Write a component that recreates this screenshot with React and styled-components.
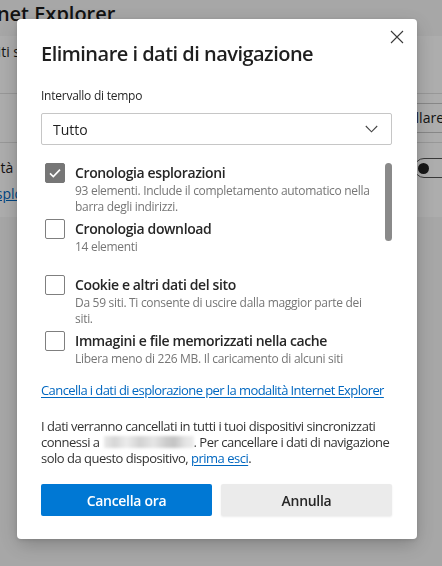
import React from "react";
import styled, { createGlobalStyle } from "styled-components";

const GlobalStyle = createGlobalStyle`
  html, body {
    margin: 0;
    padding: 0;
    background: #f7f7f7;
    font-family: "Open Sans", "Noto Sans", sans-serif;
    overflow: hidden;
  }
`;

/* ---------- background settings page (dimmed) ---------- */

const Page = styled.div`
  width: 442px;
  height: 566px;
  overflow: hidden;
  color: #1b1b1b;
`;

const PageTitle = styled.h1`
  margin: 0 0 8px -50px;
  font-size: 20px;
  line-height: 28px;
  font-weight: 600;
  white-space: nowrap;
`;

const Card = styled.div`
  background: #ffffff;
  width: 457px;
`;

const CardRow = styled.div`
  display: flex;
  align-items: ${(p) => (p.$top ? "flex-start" : "center")};
  justify-content: space-between;
  height: ${(p) => p.$h}px;
  padding-top: ${(p) => p.$pt || 0}px;
  border-bottom: ${(p) => (p.$last ? "none" : "1px solid #e0e0e0")};
  box-sizing: border-box;
  font-size: 14px;
  line-height: 20px;
  white-space: nowrap;
`;

const RowText = styled.div`
  display: flex;
  flex-direction: column;
  gap: 6px;
  margin-left: ${(p) => p.$shift}px;
`;

const RowLink = styled.a`
  color: #0067c0;
  text-decoration: underline;
`;

const GhostButton = styled.div`
  border: 1px solid #c8c8c8;
  border-radius: 3px;
  padding: 4px 12px;
  margin-left: auto;
`;

const Toggle = styled.div`
  width: 38px;
  height: 18px;
  border: 1px solid #555;
  border-radius: 10px;
  display: flex;
  align-items: center;
  padding-left: 3px;
  &::before {
    content: "";
    width: 11px;
    height: 11px;
    border-radius: 50%;
    background: #222;
  }
`;

/* ---------- dialog ---------- */

const Backdrop = styled.div`
  position: fixed;
  inset: 0;
  background: rgba(0, 0, 0, 0.32);
  display: flex;
  align-items: flex-start;
  padding: 19px 0 0 17px;
`;

const Dialog = styled.div`
  position: relative;
  width: 400px;
  box-sizing: border-box;
  padding: 21px 25px 23px 24px;
  background: #ffffff;
  border-radius: 4px;
  box-shadow: 0 6px 20px rgba(0, 0, 0, 0.22), 0 1px 4px rgba(0, 0, 0, 0.12);
  color: #1f1f1f;
`;

const CloseButton = styled.button`
  position: absolute;
  top: 2px;
  right: 4px;
  width: 32px;
  height: 32px;
  border: 0;
  background: transparent;
  padding: 0;
  display: flex;
  align-items: center;
  justify-content: center;
`;

const Title = styled.h2`
  margin: 0 0 19px;
  font-size: 20px;
  line-height: 28px;
  font-weight: 600;
  letter-spacing: -0.52px;
`;

const FieldLabel = styled.div`
  font-size: 12px;
  line-height: 18px;
  color: #262626;
  margin-bottom: 8px;
  letter-spacing: -0.25px;
`;

const Select = styled.div`
  height: 32px;
  box-sizing: border-box;
  border: 1px solid #c6c6c6;
  border-radius: 2px;
  display: flex;
  align-items: center;
  justify-content: space-between;
  padding: 0 13px 0 11px;
  font-size: 14px;
  color: #1f1f1f;
`;

const ListFrame = styled.div`
  position: relative;
  margin-top: 8px;
`;

const ScrollList = styled.div`
  height: 215px;
  overflow: hidden;
  padding: 10px 0 0 4px;
  box-sizing: border-box;
`;

const ScrollThumb = styled.div`
  position: absolute;
  top: 10px;
  right: 0;
  width: 7px;
  height: 78px;
  border-radius: 4px;
  background: #8a8a8a;
`;

const Option = styled.label`
  display: flex;
  gap: 10px;
  min-height: 56px;
  padding-bottom: 4px;
  padding-right: 10px;
  box-sizing: border-box;
`;

const Box = styled.span`
  flex: 0 0 auto;
  width: 20px;
  height: 20px;
  box-sizing: border-box;
  border-radius: 2px;
  border: 1px solid ${(p) => (p.$checked ? "#767676" : "#7f7f7f")};
  background: ${(p) => (p.$checked ? "#767676" : "#ffffff")};
  display: flex;
  align-items: center;
  justify-content: center;
`;

const OptionText = styled.div`
  display: flex;
  flex-direction: column;
`;

const OptionTitle = styled.div`
  font-size: 14px;
  line-height: 20px;
  font-weight: 600;
  color: #262626;
  letter-spacing: -0.38px;
`;

const OptionDesc = styled.div`
  font-size: 12px;
  line-height: 16px;
  color: #767676;
  letter-spacing: -0.3px;
`;

const IELink = styled.a`
  display: block;
  margin-top: 13px;
  font-size: 13px;
  line-height: 18px;
  color: #0067c0;
  text-decoration: underline;
  text-underline-offset: 2px;
  letter-spacing: -0.58px;
  white-space: nowrap;
`;

const Note = styled.p`
  margin: 19px 0 0;
  font-size: 13px;
  line-height: 16px;
  color: #333333;
  letter-spacing: -0.5px;
`;

const InlineLink = styled.a`
  color: #0067c0;
  text-decoration: underline;
  text-underline-offset: 2px;
`;

const Blurred = styled.span`
  display: inline-block;
  width: 90px;
  height: 12px;
  vertical-align: -1px;
  margin-left: 4px;
  background: linear-gradient(
    90deg,
    #e9e9e9 0%,
    #d6d6d6 12%,
    #ececec 25%,
    #d2d2d2 40%,
    #e6e6e6 55%,
    #cbcbcb 70%,
    #c4c4c4 78%,
    #e3e3e3 90%,
    #ededed 100%
  );
  filter: blur(1.5px);
`;

const Actions = styled.div`
  margin-top: 18px;
  display: grid;
  grid-template-columns: 1fr 1fr;
  gap: 9px;
`;

const Button = styled.button`
  height: 32px;
  border: 0;
  border-radius: 2px;
  font-family: inherit;
  font-size: 14px;
  font-weight: 600;
  letter-spacing: -0.3px;
  background: ${(p) => (p.$primary ? "#0078d4" : "#ebebeb")};
  color: ${(p) => (p.$primary ? "#ffffff" : "#262626")};
  box-shadow: ${(p) => (p.$primary ? "none" : "0 1px 2px rgba(0,0,0,0.08)")};
`;

const CheckIcon = () => (
  <svg width="14" height="14" viewBox="0 0 14 14">
    <path d="M2 7.4 L5.3 10.6 L12 3.6" fill="none" stroke="#fff" strokeWidth="1.6" />
  </svg>
);

const options = [
  {
    title: "Cronologia esplorazioni",
    desc: "93 elementi. Include il completamento automatico nella barra degli indirizzi.",
    checked: true,
  },
  { title: "Cronologia download", desc: "14 elementi", checked: false },
  {
    title: "Cookie e altri dati del sito",
    desc: "Da 59 siti. Ti consente di uscire dalla maggior parte dei siti.",
    checked: false,
  },
  {
    title: "Immagini e file memorizzati nella cache",
    desc: "Libera meno di 226 MB. Il caricamento di alcuni siti potrebbe essere più lento alla visita successiva.",
    checked: false,
  },
  { title: "Password", desc: "Nessuna", checked: false },
  { title: "Dati di compilazione automatica dei moduli", desc: "Nessuno", checked: false },
];

export default function App() {
  return (
    <>
      <GlobalStyle />
      <Page>
        <PageTitle>Internet Explorer</PageTitle>
        <Card>
          <CardRow $h={58} $pt={6} $top>
            <RowText $shift={-84}>
              <span>Permetti ai siti selezionati di essere ricaricati in modalità Internet Explorer</span>
            </RowText>
          </CardRow>
          <CardRow $h={49}>
            <GhostButton>Scegli cosa cancellare</GhostButton>
          </CardRow>
          <CardRow $h={74} $pt={15} $top $last>
            <RowText $shift={-44}>
              <span>Modalità</span>
              <RowLink>Vedi esplorazione</RowLink>
            </RowText>
            <Toggle />
          </CardRow>
        </Card>
      </Page>

      <Backdrop>
        <Dialog>
          <CloseButton aria-label="Chiudi">
            <svg width="14" height="14" viewBox="0 0 14 14">
              <path d="M1 1 L13 13 M13 1 L1 13" stroke="#3a3a3a" strokeWidth="1.1" />
            </svg>
          </CloseButton>
          <Title>Eliminare i dati di navigazione</Title>
          <FieldLabel>Intervallo di tempo</FieldLabel>
          <Select>
            <span>Tutto</span>
            <svg width="13" height="8" viewBox="0 0 13 8">
              <path d="M0.8 1 L6.5 6.8 L12.2 1" fill="none" stroke="#444" strokeWidth="1.1" />
            </svg>
          </Select>
          <ListFrame>
            <ScrollList>
              {options.map((o) => (
                <Option key={o.title}>
                  <Box $checked={o.checked}>{o.checked && <CheckIcon />}</Box>
                  <OptionText>
                    <OptionTitle>{o.title}</OptionTitle>
                    <OptionDesc>{o.desc}</OptionDesc>
                  </OptionText>
                </Option>
              ))}
            </ScrollList>
            <ScrollThumb />
          </ListFrame>
          <IELink>Cancella i dati di esplorazione per la modalità Internet Explorer</IELink>
          <Note>
            I dati verranno cancellati in tutti i tuoi dispositivi sincronizzati connessi a
            <Blurred />. Per cancellare i dati di navigazione solo da questo dispositivo,{" "}
            <InlineLink>prima esci</InlineLink>.
          </Note>
          <Actions>
            <Button $primary>Cancella ora</Button>
            <Button>Annulla</Button>
          </Actions>
        </Dialog>
      </Backdrop>
    </>
  );
}
